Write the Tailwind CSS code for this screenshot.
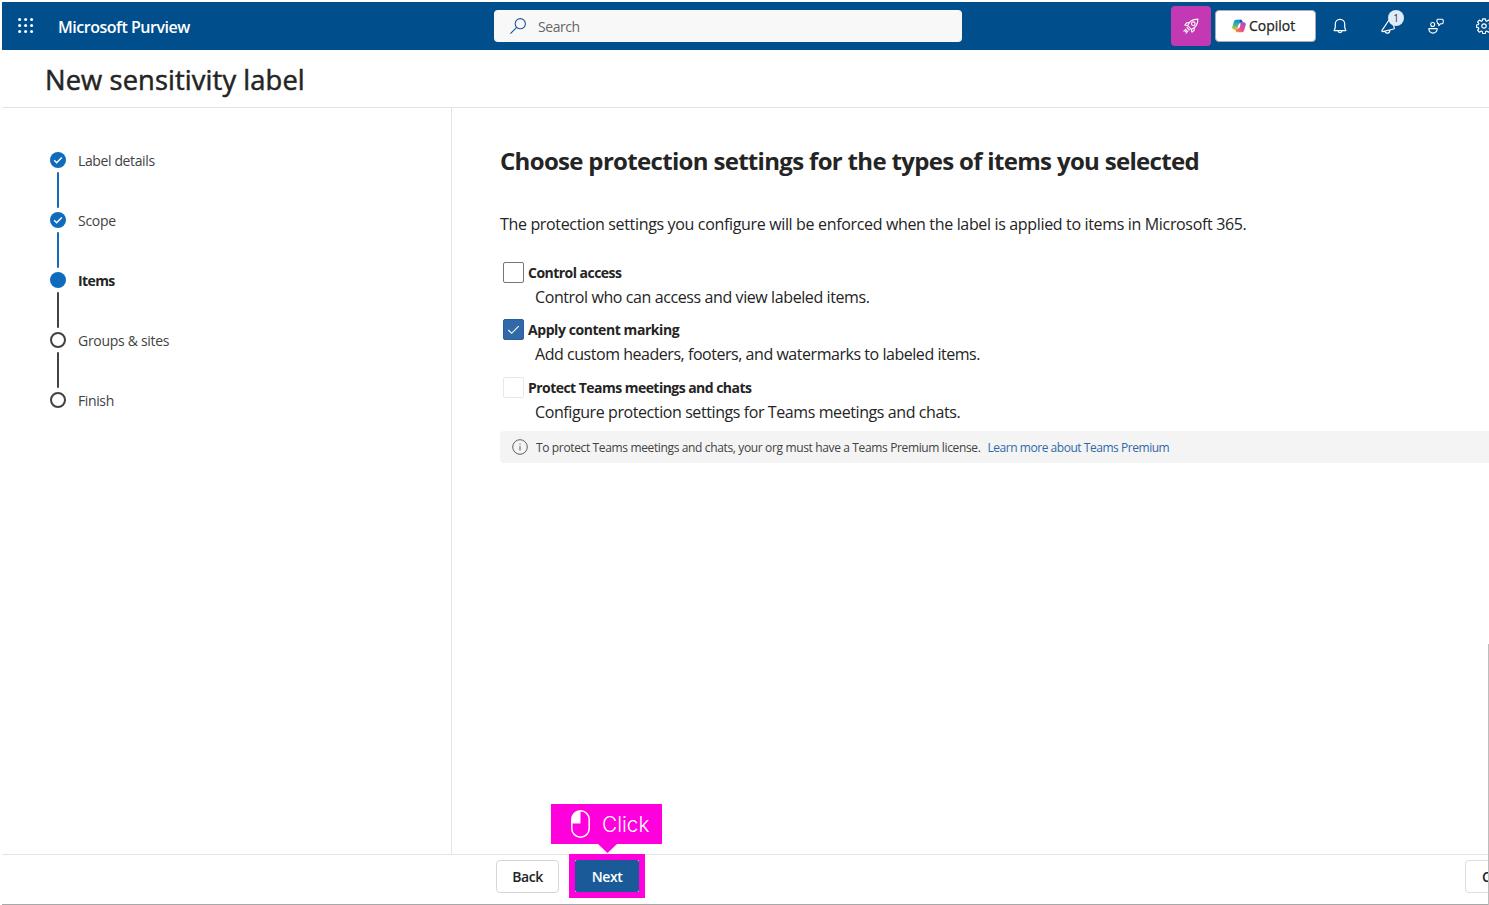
<!DOCTYPE html>
<html lang="en">
<head>
<meta charset="utf-8">
<title>Microsoft Purview</title>
<script src="https://cdn.jsdelivr.net/npm/@tailwindcss/browser@4"></script>
</head>
<body class="relative flex h-screen w-screen flex-col overflow-hidden bg-white pl-[2px] pt-[2px] font-['Open_Sans','Noto_Sans',sans-serif] text-[#242424] whitespace-nowrap">
<header class="flex h-12 shrink-0 items-center bg-[#004e8c] text-white">
  <svg class="ml-4 size-4 shrink-0" viewBox="0 0 16 16" fill="currentColor"><circle cx="1.6" cy="1.6" r="1.5"/><circle cx="7.6" cy="1.6" r="1.5"/><circle cx="13.6" cy="1.6" r="1.5"/><circle cx="1.6" cy="7.6" r="1.5"/><circle cx="7.6" cy="7.6" r="1.5"/><circle cx="13.6" cy="7.6" r="1.5"/><circle cx="1.6" cy="13.6" r="1.5"/><circle cx="7.6" cy="13.6" r="1.5"/><circle cx="13.6" cy="13.6" r="1.5"/></svg>
  <div class="ml-6 w-[436px] shrink-0 pt-0.5 text-base tracking-[-0.47px] font-semibold">Microsoft Purview</div>
  <div class="flex h-8 w-[468px] shrink-0 items-center rounded bg-[#f8f8f8] text-sm tracking-[-0.45px] text-[#666]">
    <svg class="ml-4 size-4" viewBox="0 0 16 16" fill="none" stroke="#1b5a96" stroke-width="1.1"><circle cx="10.3" cy="5.7" r="5.1"/><path d="M6.7 9.3.4 15.6"/></svg>
    <span class="ml-3 pt-0.5">Search</span>
  </div>
  <div class="ml-[209px] flex size-10 shrink-0 items-center justify-center rounded bg-[#c239b3]">
    <svg class="size-4" viewBox="0 0 16 16" fill="none" stroke="currentColor" stroke-width="1.1" stroke-linejoin="round" stroke-linecap="round"><path d="M4.600 7.600C6 3.600 9.800 1.100 14.900 1.100c0 5.100-2.500 8.900-6.500 10.300Z"/><circle cx="10.300" cy="5.700" r="1.800"/><path d="M6.200 4.800H3.700L1.800 7l2.800.8M11.200 9.800v2.500L9 14.200l-.8-2.800M4 9.700l2.300 2.300M2.900 11.100.9 13.100M4.900 13.100l-2 2M3.700 12.300l-1.200 1.200"/></svg>
  </div>
  <div class="ml-1 flex h-8 w-[101px] shrink-0 items-center rounded border border-[#a9adb2] bg-white text-sm text-[#242424]">
    <svg class="ml-4 size-3.5" viewBox="0 0 14 14"><defs><linearGradient id="a" x1="0" y1="0" x2="0" y2="1"><stop stop-color="#1688e0"/><stop offset=".5" stop-color="#32b6a5"/><stop offset="1" stop-color="#f6c514"/></linearGradient><linearGradient id="b" x1="1" y1="0" x2="0" y2="1"><stop stop-color="#9b4de8"/><stop offset=".55" stop-color="#ed4b86"/><stop offset="1" stop-color="#fb9a3c"/></linearGradient></defs><path d="M4.200.7h4.300c1 0 1.500.6 1.800 1.600l.7 1.400H9c-1 .1-1.700.6-2 1.700L5.600 9.600c-.3.800-.8 1.100-1.500 1.100H2.200C.5 10.700 0 9.200.3 8L1.800 3C2.300 1.400 3 .7 4.200.7Z" fill="url(#a)"/><path d="M9.800 13.300H5.500c-1 0-1.500-.6-1.800-1.600L3 10.300h2c1-.1 1.700-.6 2-1.700l1.400-4.200c.3-.8.8-1.100 1.500-1.100h1.900c1.700 0 2.200 1.500 1.900 2.700l-1.500 5c-.5 1.600-1.200 2.300-2.400 2.300Z" fill="url(#b)"/><path d="M7.500.7h1c1 0 1.500.6 1.800 1.600l.4 1H9.500c-.7 0-1.200.3-1.500 1Z" fill="#2456bd"/><path d="M6.600 5.400h2l-1 3.300h-2Z" fill="#fff"/></svg>
    <span class="ml-[3px] [-webkit-text-stroke:0.25px_#242424]">Copilot</span>
  </div>
  <svg class="ml-4 size-4 shrink-0" viewBox="0 0 16 16" fill="none" stroke="currentColor" stroke-width="1.200" stroke-linejoin="round"><path d="M8 1.400c-2.800 0-4.700 2-4.700 4.700v3.400L2.100 12.600h11.800l-1.200-3.100V6.100C12.700 3.400 10.800 1.400 8 1.400ZM6 12.800c.2 2.400 3.800 2.400 4 0"/></svg>
  <div class="relative ml-8 size-4 shrink-0">
    <svg class="size-4" viewBox="0 0 16 16" fill="none" stroke="currentColor" stroke-width="1.200" stroke-linejoin="round"><path d="M9 2 2 12.300c-.4.700 0 1.500.8 1.300L13.500 11c.9-.3 1-1 .7-1.600L12 3M5 13.300c.6 2.900 4.700 2.400 4.900-1.200"/></svg>
    <span class="absolute left-2 -top-2 flex size-4 items-center justify-center rounded-full bg-[#deecf9] text-[10px] text-[#333]">1</span>
  </div>
  <svg class="ml-8 size-4 shrink-0" viewBox="0 0 16 16" fill="none" stroke="currentColor" stroke-width="1.100" stroke-linejoin="round"><circle cx="4.700" cy="6.500" r="2"/><path d="M.8 10.600h8.400c.2 6-8.600 6-8.400 0ZM9.700 1.200h4.500c1.500 0 1.500 4.500-.2 4.500h-1.200L10.700 7.700V5.700c-2.200 0-2.200-4.500-1-4.500Z"/></svg>
  <svg class="ml-8 size-4 shrink-0" viewBox="0 0 16 16" fill="none" stroke="currentColor" stroke-width="1.200" stroke-linejoin="round"><path d="M6.700.8h2.600l.4 2 1 .5 1.900-1.200 1.700 1.800-1.100 1.700.4 1 2 .4v2.200l-2 .5-.4 1 1.100 1.700-1.700 1.800-1.900-1.200-1 .5-.4 2H6.700l-.4-2-1-.5-1.900 1.200-1.700-1.800 1.100-1.700-.4-1-2-.5V7l2-.4.4-1-1.100-1.700 1.700-1.800 1.900 1.200 1-.5Z"/><circle cx="8" cy="8" r="2.200"/></svg>
</header>

<div class="flex h-[58px] shrink-0 items-center border-b border-[#e3e3e3] pl-[43px] pt-1 text-[27.3px] [-webkit-text-stroke:0.5px_#242424]"><h1 class="tracking-[0.1px]">New sensitivity label</h1></div>

<div class="flex min-h-0 flex-1">
  <nav class="w-[450px] shrink-0 border-r border-[#e3e3e3] pl-12 pt-11 text-sm tracking-[-0.38px] text-[#424242]">
    <div class="flex h-4 items-center gap-3"><svg class="size-4" viewBox="0 0 16 16" fill="none"><circle cx="8" cy="8" r="8" fill="#0f6cbd"/><path d="m4.200 8.300 2.400 2.400 5.200-5.200" stroke="#fff" stroke-width="1.500"/></svg><span class="pt-px">Label details</span></div>
    <div class="my-1 ml-[7px] h-9 w-0.5 rounded bg-[#0f6cbd]"></div>
    <div class="flex h-4 items-center gap-3"><svg class="size-4" viewBox="0 0 16 16" fill="none"><circle cx="8" cy="8" r="8" fill="#0f6cbd"/><path d="m4.200 8.300 2.400 2.400 5.200-5.200" stroke="#fff" stroke-width="1.500"/></svg><span class="pt-px tracking-[-0.3px]">Scope</span></div>
    <div class="my-1 ml-[7px] h-9 w-0.5 rounded bg-[#0f6cbd]"></div>
    <div class="flex h-4 items-center gap-3"><div class="size-4 rounded-full bg-[#0f6cbd]"></div><span class="pt-px tracking-[-0.6px] font-bold text-[#242424]">Items</span></div>
    <div class="my-1 ml-[7px] h-9 w-0.5 rounded bg-[#424242]"></div>
    <div class="flex h-4 items-center gap-3"><div class="size-4 rounded-full border-2 border-[#424242]"></div><span class="pt-px tracking-[-0.3px]">Groups &amp; sites</span></div>
    <div class="my-1 ml-[7px] h-9 w-0.5 rounded bg-[#424242]"></div>
    <div class="flex h-4 items-center gap-3"><div class="size-4 rounded-full border-2 border-[#424242]"></div><span class="pt-px">Finish</span></div>
  </nav>
  <main class="min-w-0 flex-1 overflow-hidden pl-12 pt-[37px]">
    <h2 class="h-8 text-2xl leading-8 font-bold tracking-[-0.68px]">Choose protection settings for the types of items you selected</h2>
    <p class="mt-[35px] h-6 text-base leading-6 tracking-[-0.34px]">The protection settings you configure will be enforced when the label is applied to items in Microsoft 365.</p>
    <div class="mt-[26px] flex h-5 items-center gap-1 pl-[3px] text-sm font-bold tracking-[-0.53px]"><i class="size-[21px] rounded-xs border border-[#767676]"></i><span class="pt-[2px]">Control access</span></div>
    <p class="mt-[3px] h-6 pl-[35px] text-base leading-6 tracking-[-0.4px]">Control who can access and view labeled items.</p>
    <div class="mt-[10px] flex h-5 items-center gap-1 pl-[3px] text-sm font-bold tracking-[-0.43px]"><svg class="size-[21px] rounded-xs border border-[#2c5f99] bg-[#3068a8]" viewBox="0 0 20 20" fill="none" stroke="#fff" stroke-width="1.200"><path d="m4.500 10.500 3.500 3.500 7.500-7.500"/></svg><span class="pt-[2px]">Apply content marking</span></div>
    <p class="mt-[3px] h-6 pl-[35px] text-base leading-6 tracking-[-0.46px]">Add custom headers, footers, and watermarks to labeled items.</p>
    <div class="mt-[11px] flex h-5 items-center gap-1 pl-[3px] text-sm font-bold tracking-[-0.54px]"><i class="size-[21px] rounded-xs border border-[#e8e8e8]"></i><span class="pt-[2px]">Protect Teams meetings and chats</span></div>
    <p class="mt-[3px] h-6 pl-[35px] text-base leading-6 tracking-[-0.41px]">Configure protection settings for Teams meetings and chats.</p>
    <div class="mt-[7px] flex h-8 items-center rounded-l bg-[#f4f4f4] pl-3 text-xs tracking-[-0.36px] text-[#424242]"><svg class="mr-2 size-4" viewBox="0 0 16 16" fill="none" stroke="#616161"><circle cx="8" cy="8" r="7.300"/><path d="M8 7v4.500M8 4.500v1.200"/></svg><span class="pt-px">To protect Teams meetings and chats, your org must have a Teams Premium license.</span><a class="ml-[7px] pt-px tracking-[-0.46px] text-[#2f6aa8]">Learn more about Teams Premium</a></div>
  </main>
</div>

<footer class="relative flex h-[51px] shrink-0 border-t border-b border-t-[#e3e3e3] border-b-[#a8a8a8] pl-[494px] text-sm font-semibold tracking-[-0.4px]">
  <button class="mt-[5px] flex h-[33px] w-[63px] shrink-0 items-center justify-center rounded border border-[#d6d6d6] pt-px">Back</button>
  <div class="-mt-px ml-[10px] flex h-[44px] w-[76px] shrink-0 items-center justify-center border-[6px] border-[#ff00dc] bg-[#f3e6f2]"><button class="flex h-8 w-16 items-center justify-center rounded-xs bg-[#1b5a98] pt-0.5 text-white">Next</button></div>
  <button class="mt-[5px] ml-[820px] flex h-[33px] w-[70px] shrink-0 items-center rounded border border-[#dedede] pt-px pl-4">Cancel</button>
  <div class="absolute left-[549px] -top-[51px] flex h-10 w-[111px] items-center bg-[#ff00dc] text-[20.800px] font-light tracking-normal text-white">
    <svg class="ml-5 h-7 w-[19px]" viewBox="0 0 19 28" fill="none" stroke="#fff" stroke-width="1.500"><rect x=".8" y=".8" width="17.400" height="26.400" rx="8.700"/><path d="M9.500 1v12.500H1V9C1 4 5 1 9.500 1Z" fill="#fff" stroke="none"/></svg>
    <span class="ml-3 pt-0.5 font-['Inter',sans-serif]">Click</span>
    <svg class="absolute left-[47px] top-10 h-[9px] w-[19px]" viewBox="0 0 19 9"><path d="M0 0h19L9.500 9Z" fill="#ff00dc"/></svg>
  </div>
</footer>
<div class="absolute right-0 bottom-0 h-[261px] w-px bg-[#bdbdbd]"></div>
</body>
</html>
